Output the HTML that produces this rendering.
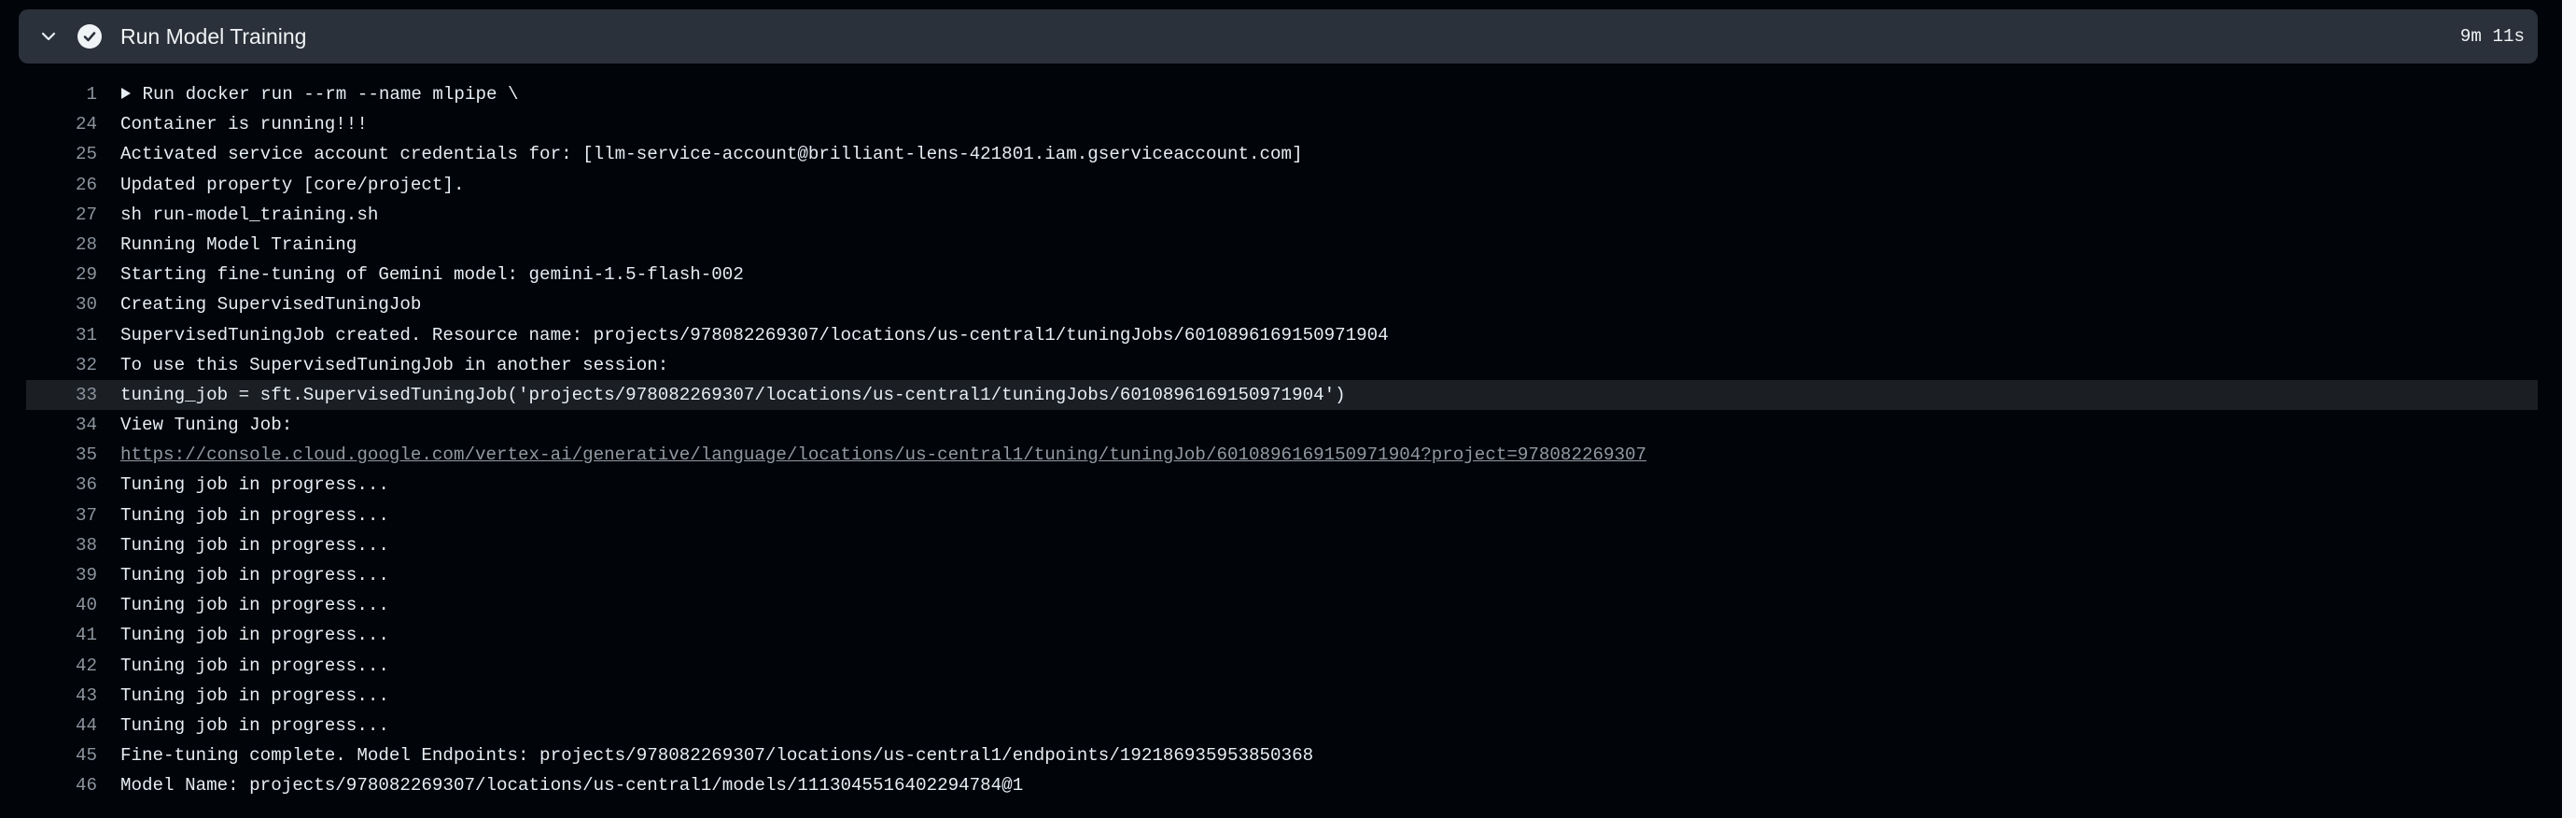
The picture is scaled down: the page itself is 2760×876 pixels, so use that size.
<!DOCTYPE html>
<html><head><meta charset="utf-8"><style>
html,body{margin:0;padding:0;background:#010409;width:2760px;height:876px;overflow:hidden}
.hdr{position:absolute;left:20px;top:10px;width:2699px;height:58px;background:#2b313a;border-radius:10px}
.hdr .t{position:absolute;left:109px;top:0;font:23px "Liberation Sans",sans-serif;line-height:58px;color:#f0f3f6}
.hdr .d{position:absolute;right:14px;top:0;font:19.2px "Liberation Mono",monospace;line-height:58px;color:#f0f3f6}
.rows{position:absolute;left:0;top:85px;width:2760px}
.r{position:relative;height:32.2px;font:19.2px "Liberation Mono",monospace;line-height:32.2px;color:#e6edf3;white-space:pre}
.r .n{position:absolute;left:0;width:104px;text-align:right;color:#8b949e}
.r .c{position:absolute;left:129px}
.hl{background:#1b1e23;margin-left:28px;width:2691px}
.hl .n{left:-28px}.hl .c{left:101px}
a{color:#9198a1;text-decoration:underline}
.edge{position:absolute;right:0;top:0;width:15px;height:876px;background:#f6f8fa}
</style></head><body>
<div class="edge"></div>
<div class="hdr">
<svg style="position:absolute;left:24px;top:22px" width="16" height="14" viewBox="0 0 16 14"><path d="M2 4 L8 10 L14 4" stroke="#e6edf3" stroke-width="2.2" fill="none" stroke-linecap="round" stroke-linejoin="round"/></svg>
<svg style="position:absolute;left:63px;top:16px" width="26" height="26" viewBox="0 0 26 26"><circle cx="13" cy="13" r="13" fill="#f0f3f6"/><path d="M8 13.5 L11.5 17 L18 9.5" stroke="#2b313a" stroke-width="2.6" fill="none" stroke-linecap="round" stroke-linejoin="round"/></svg>
<div class="t">Run Model Training</div>
<div class="d">9m 11s</div>
</div>
<div class="rows">
<div class="r"><span class="n">1</span><span class="c"><svg width="12" height="14" viewBox="0 0 12 14" style="vertical-align:-1px"><path d="M1 1 L11 7 L1 13 Z" fill="#e6edf3"/></svg> Run docker run --rm --name mlpipe \</span></div>
<div class="r"><span class="n">24</span><span class="c">Container is running!!!</span></div>
<div class="r"><span class="n">25</span><span class="c">Activated service account credentials for: [llm-service-account@brilliant-lens-421801.iam.gserviceaccount.com]</span></div>
<div class="r"><span class="n">26</span><span class="c">Updated property [core/project].</span></div>
<div class="r"><span class="n">27</span><span class="c">sh run-model_training.sh</span></div>
<div class="r"><span class="n">28</span><span class="c">Running Model Training</span></div>
<div class="r"><span class="n">29</span><span class="c">Starting fine-tuning of Gemini model: gemini-1.5-flash-002</span></div>
<div class="r"><span class="n">30</span><span class="c">Creating SupervisedTuningJob</span></div>
<div class="r"><span class="n">31</span><span class="c">SupervisedTuningJob created. Resource name: projects/978082269307/locations/us-central1/tuningJobs/6010896169150971904</span></div>
<div class="r"><span class="n">32</span><span class="c">To use this SupervisedTuningJob in another session:</span></div>
<div class="r hl"><span class="n">33</span><span class="c">tuning_job = sft.SupervisedTuningJob('projects/978082269307/locations/us-central1/tuningJobs/6010896169150971904')</span></div>
<div class="r"><span class="n">34</span><span class="c">View Tuning Job:</span></div>
<div class="r"><span class="n">35</span><span class="c"><a>https://console.cloud.google.com/vertex-ai/generative/language/locations/us-central1/tuning/tuningJob/6010896169150971904?project=978082269307</a></span></div>
<div class="r"><span class="n">36</span><span class="c">Tuning job in progress...</span></div>
<div class="r"><span class="n">37</span><span class="c">Tuning job in progress...</span></div>
<div class="r"><span class="n">38</span><span class="c">Tuning job in progress...</span></div>
<div class="r"><span class="n">39</span><span class="c">Tuning job in progress...</span></div>
<div class="r"><span class="n">40</span><span class="c">Tuning job in progress...</span></div>
<div class="r"><span class="n">41</span><span class="c">Tuning job in progress...</span></div>
<div class="r"><span class="n">42</span><span class="c">Tuning job in progress...</span></div>
<div class="r"><span class="n">43</span><span class="c">Tuning job in progress...</span></div>
<div class="r"><span class="n">44</span><span class="c">Tuning job in progress...</span></div>
<div class="r"><span class="n">45</span><span class="c">Fine-tuning complete. Model Endpoints: projects/978082269307/locations/us-central1/endpoints/192186935953850368</span></div>
<div class="r"><span class="n">46</span><span class="c">Model Name: projects/978082269307/locations/us-central1/models/1113045516402294784@1</span></div>
</div>
</body></html>
